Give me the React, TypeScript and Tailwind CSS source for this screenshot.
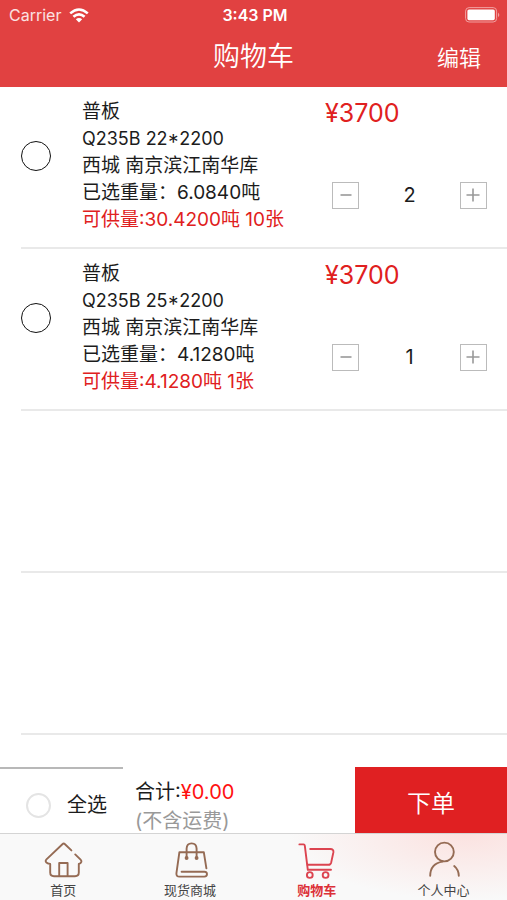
import { useState } from "react";
import type { ReactNode } from "react";

const items = [
  {
    id: 1,
    name: "普板",
    spec: "Q235B 22*2200",
    store: "西城 南京滨江南华库",
    weight: "已选重量：6.0840吨",
    supply: "可供量:30.4200吨 10张",
    price: "¥3700",
    count: 2,
  },
  {
    id: 2,
    name: "普板",
    spec: "Q235B 25*2200",
    store: "西城 南京滨江南华库",
    weight: "已选重量：4.1280吨",
    supply: "可供量:4.1280吨 1张",
    price: "¥3700",
    count: 1,
  },
];

function TabIcon({ children }: { children: ReactNode }) {
  return (
    <svg
      aria-hidden
      className="w-10 h-[38px]"
      viewBox="0 0 40 38"
      fill="none"
      stroke="currentColor"
      strokeWidth={1.9}
      strokeLinecap="round"
      strokeLinejoin="round"
    >
      {children}
    </svg>
  );
}

const tabs = [
  {
    label: "首页",
    href: "#home",
    active: false,
    icon: (
      <TabIcon>
        <path d="M28.4 9.4 22 3.2Q20.7 2 19.4 3.2L3.2 18.6Q2 20 3.2 21.4 4.4 22.8 7.2 23V31.5Q7.2 35.2 11 35.2H32Q35.8 35.2 35.8 31.5V23Q38 22.4 38.4 20.8 38.6 19.6 37.6 18.6L32.2 13.4" />
        <path d="M16.2 35V22H24.6V35" />
      </TabIcon>
    ),
  },
  {
    label: "现货商城",
    href: "#mall",
    active: false,
    icon: (
      <TabIcon>
        <path d="M36.4 27.4 33.8 11.2H9.4L6.4 32.4Q6.2 35.6 9.4 35.6H34.4Q37 35.4 37 33 36.8 30.8 34.4 30.8H11.6" />
        <path d="M16.6 16.6V7.6Q16.8 2.4 21.6 2.4T26.6 7.6V16.6" />
        <circle cx={16.6} cy={17} r={1} fill="currentColor" />
        <circle cx={26.6} cy={17} r={1} fill="currentColor" />
      </TabIcon>
    ),
  },
  {
    label: "购物车",
    href: "#cart",
    active: true,
    icon: (
      <TabIcon>
        <path d="M2.4 3.4H6.6Q7.6 3.4 7.8 4.6L10.8 28.8H34" />
        <path d="M13.2 8H33.4Q36.8 8 36.4 11.2L34.2 21.4Q33.6 23.8 31.4 23.8H10.6" />
        <circle cx={12.8} cy={34} r={2.9} />
        <circle cx={28.6} cy={34} r={2.9} />
      </TabIcon>
    ),
  },
  {
    label: "个人中心",
    href: "#me",
    active: false,
    icon: (
      <TabIcon>
        <circle cx={20.4} cy={11} r={9.4} />
        <path d="M6.2 34.8Q6.4 22.4 18.6 20.6" />
        <path d="M30.2 25Q34.6 28.6 34.8 34.8" />
      </TabIcon>
    ),
  },
];

function StatusBar() {
  return (
    <div className="grid grid-cols-3 items-center h-[30px] pl-[9px] pr-1.5 text-base">
      <div className="flex items-center gap-2 text-white/85">
        <span>Carrier</span>
        <svg aria-hidden className="w-5 h-[15px] text-white" viewBox="0 0 20 15" fill="none" stroke="currentColor" strokeWidth={2.6}>
          <path d="M1.2 5.4Q10-2.4 18.8 5.4" />
          <path d="M4.4 8.8Q10 3.8 15.6 8.8" />
          <path d="M10 14.4 6.8 11.2Q10 8.6 13.2 11.2Z" fill="currentColor" stroke="none" />
        </svg>
      </div>
      <span className="text-center font-semibold">3:43 PM</span>
      <svg aria-hidden className="justify-self-end w-9 h-4" viewBox="0 0 36 16">
        <rect x={0.6} y={0.6} width={31} height={14.4} rx={3.5} fill="none" stroke="#f2a0a0" strokeWidth={1} />
        <rect x={2.4} y={2.4} width={27.4} height={10.8} rx={1.6} fill="#fff" />
        <path d="M33 5.4Q35.6 7.8 33 10.2Z" fill="#f2a0a0" />
      </svg>
    </div>
  );
}

function CartRow({ item }: { item: (typeof items)[number] }) {
  const [count, setCount] = useState(item.count);
  const stepButton =
    "flex items-center justify-center w-[27px] h-[27px] border border-[#bbb] text-[#999]";

  return (
    <li className="flex min-h-[162px] ml-[21px] pt-[11px] border-b-2 border-[#e9e9e9]">
      <input
        type="checkbox"
        aria-label={item.spec}
        className="appearance-none shrink-0 w-[30px] h-[30px] mt-[43px] rounded-full border border-[#111] checked:bg-[#e02020]"
      />
      <div className="flex-1 ml-[31px] text-[19px] leading-[27px] whitespace-nowrap">
        <h2>{item.name}</h2>
        <p className="text-lg leading-[27px]">{item.spec}</p>
        <p>{item.store}</p>
        <p>{item.weight}</p>
        <p className="text-[#e02020]">{item.supply}</p>
      </div>
      <div className="shrink-0 w-[182px] pr-5">
        <p className="text-[25px] leading-[30px] text-[#e02020]">{item.price}</p>
        <div className="flex items-center justify-between mt-[53px] pl-[7px]">
          <button type="button" aria-label="减少" className={stepButton} onClick={() => setCount(Math.max(0, count - 1))}>
            <svg className="w-3.5 h-3.5" viewBox="0 0 14 14" stroke="currentColor" strokeWidth={1.6}>
              <path d="M1.5 7h11" />
            </svg>
          </button>
          <span className="text-xl">{count}</span>
          <button type="button" aria-label="增加" className={stepButton} onClick={() => setCount(count + 1)}>
            <svg className="w-3.5 h-3.5" viewBox="0 0 14 14" stroke="currentColor" strokeWidth={1.6}>
              <path d="M.5 7h13M7 .5v13" />
            </svg>
          </button>
        </div>
      </div>
    </li>
  );
}

export default function App() {
  return (
    <div className="flex flex-col min-h-screen bg-white text-[#1c1c1c] font-['Inter','Noto_Sans_CJK_SC',sans-serif]">
      <header className="bg-[#e14141] text-white">
        <StatusBar />
        <div className="grid grid-cols-3 items-start h-[57px] px-[26px]">
          <h1 className="col-start-2 text-center text-[27px] leading-[54px] font-[350]">购物车</h1>
          <button type="button" className="justify-self-end text-[22px] leading-[56px] font-[350]">编辑</button>
        </div>
      </header>

      <main className="flex-1">
        <ul>
          {items.map((item) => (
            <CartRow key={item.id} item={item} />
          ))}
          {/* Empty table rows */}
          <li className="h-[162px] ml-[21px] border-b-2 border-[#e9e9e9]" />
          <li className="h-[162px] ml-[21px] border-b-2 border-[#e9e9e9]" />
        </ul>
      </main>

      {/* Checkout bar */}
      <section className="flex h-[66px] text-xl">
        <label className="flex items-center gap-4 w-[123px] pl-[26px] pt-2 border-t-2 border-[#b8b8b8]">
          <input
            type="checkbox"
            className="appearance-none w-[25px] h-[25px] rounded-full border-2 border-[#e4e4e4] checked:bg-[#e02020]"
          />
          全选
        </label>
        <div className="flex-1 pl-3 pt-[11px] leading-[29px] whitespace-nowrap">
          <p>
            合计:<span className="text-[#ff1010]">¥0.00</span>
          </p>
          <p className="text-[#999]">(不含运费)</p>
        </div>
        <button type="button" className="w-[30%] pt-2 bg-[#e02022] text-white text-2xl font-[350]">
          下单
        </button>
      </section>

      <nav className="grid grid-cols-4 h-[67px] border-t border-[#d4d4d4] bg-[#f9f9f9] bg-[radial-gradient(ellipse_35%_100%_at_92%_0%,#fbe2e0,#f9f9f9)]">
        {tabs.map((tab) => (
          <a
            key={tab.href}
            href={tab.href}
            className={`flex flex-col items-center pt-[7px] text-[13px] leading-[22px] ${
              tab.active ? "text-[#dc3038] font-bold" : "text-[#444]"
            }`}
          >
            <span className={tab.active ? "text-[#dc4450]" : "text-[#956b54]"}>{tab.icon}</span>
            {tab.label}
          </a>
        ))}
      </nav>
    </div>
  );
}
